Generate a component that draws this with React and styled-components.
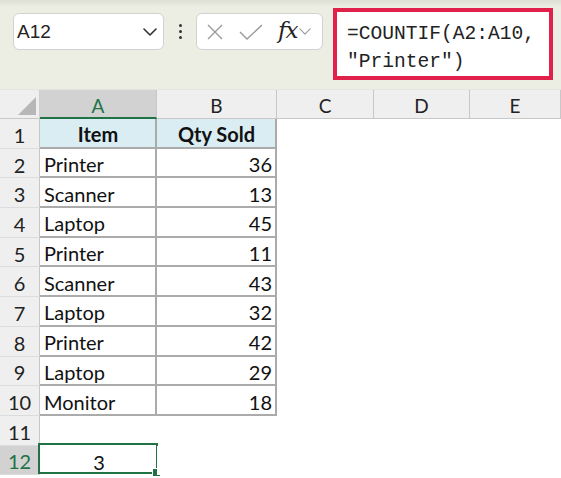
import React from "react";
import styled, { createGlobalStyle } from "styled-components";

const Global = createGlobalStyle`
  html, body { margin: 0; padding: 0; background: #ffffff; }
  body { width: 561px; height: 478px; overflow: hidden; font-family: Lato, "Noto Sans", sans-serif; }
  * { box-sizing: border-box; }
`;

const GREEN = "#217346";

const Toolbar = styled.div`
  height: 90px;
  display: flex;
  align-items: flex-start;
  padding: 8px 0 0 13px;
  background: linear-gradient(#dfe0d4 0px, #e6e7dc 4px, #eceee3 7px, #eceee3 100%);
  border-bottom: 1px solid #e4e4e4;
`;

const NameBox = styled.div`
  margin-top: 5px;
  width: 151px;
  height: 37px;
  background: #fff;
  border: 1px solid #d2d2d2;
  border-radius: 6px;
  display: flex;
  align-items: center;
  justify-content: space-between;
  padding: 0 6px 0 3px;
  font-family: "Liberation Sans", Arial, sans-serif;
  font-size: 19px;
  color: #222;
`;

const Dots = styled.div`
  margin-top: 5px;
  width: 32px;
  height: 37px;
  display: flex;
  flex-direction: column;
  align-items: center;
  justify-content: center;
  gap: 3px;
`;

const Dot = styled.span`
  width: 3px;
  height: 3px;
  border-radius: 50%;
  background: #333;
`;

const FxBox = styled.div`
  margin-top: 5px;
  width: 127px;
  height: 37px;
  background: #fff;
  border: 1px solid #d2d2d2;
  border-radius: 6px;
  display: flex;
  align-items: center;
  padding: 0 0 0 9px;
`;

const FxText = styled.span`
  font-family: "DejaVu Serif", "Liberation Serif", serif;
  font-style: italic;
  font-size: 23px;
  color: #222;
  margin: -4px 2px 0 15px;
  letter-spacing: -1px;
`;

const FormulaBox = styled.div`
  margin-left: 10px;
  width: 220px;
  height: 72px;
  background: #fff;
  border: 4px solid #e0214b;
  padding: 8px 0 0 10px;
  font-family: "Liberation Mono", "DejaVu Sans Mono", monospace;
  font-size: 19.6px;
  line-height: 28px;
  color: #222;
  white-space: pre;
`;

const Sheet = styled.div`
  display: grid;
  grid-template-columns: 40px 117px 120px 97px 96px 91px;
  grid-template-rows: 29px repeat(12, 29.7px);
  font-family: Lato, "Noto Sans", sans-serif;
  color: #111;
`;

const Corner = styled.div`
  background: #efefef;
  border-right: 1px solid #cfcfcf;
  border-bottom: 1px solid #c8c8c8;
  position: relative;
  &::after {
    content: "";
    position: absolute;
    right: 3px;
    bottom: 3px;
    width: 0;
    height: 0;
    border-left: 18px solid transparent;
    border-bottom: 18px solid #b7b7b7;
  }
`;

const ColHead = styled.div`
  background: ${(p) => (p.$active ? "#d2d2d2" : "#efefef")};
  color: ${(p) => (p.$active ? GREEN : "#222")};
  border-right: 1px solid #c8c8c8;
  border-bottom: ${(p) => (p.$active ? `2px solid ${GREEN}` : "1px solid #c8c8c8")};
  display: flex;
  align-items: center;
  justify-content: center;
  font-size: 19px;
  padding-top: 3px;
`;

const RowHead = styled.div`
  background: ${(p) => (p.$active ? "#d2d2d2" : "#efefef")};
  color: ${(p) => (p.$active ? GREEN : "#222")};
  border-right: 1px solid #c8c8c8;
  border-bottom: 1px solid #dcdcdc;
  display: flex;
  align-items: center;
  justify-content: center;
  font-size: 20px;
  padding-top: 3px;
`;

const Cell = styled.div`
  background: ${(p) => (p.$head ? "#daedf3" : "#fff")};
  border-right: ${(p) => (p.$boxed ? "2px solid #ababab" : "none")};
  border-bottom: ${(p) => (p.$boxed ? "2px solid #ababab" : "none")};
  display: flex;
  align-items: center;
  justify-content: ${(p) => (p.$align === "right" ? "flex-end" : p.$align === "center" ? "center" : "flex-start")};
  padding: 3px 3px 0 4px;
  font-size: 20px;
  font-weight: ${(p) => (p.$head ? 700 : 400)};
  position: relative;
`;

const Selection = styled.div`
  position: absolute;
  left: -2px;
  top: -3px;
  right: -1px;
  bottom: 1px;
  border: 2px solid ${GREEN};
  pointer-events: none;
  &::after {
    content: "";
    position: absolute;
    right: -5px;
    bottom: -5px;
    width: 7px;
    height: 7px;
    background: ${GREEN};
    border: 1px solid #fff;
  }
`;

const Icon = styled.svg`
  display: block;
  flex: none;
`;

const Chevron = ({ color = "#333", w = 14, h = 8, sw = 1.6 }) => (
  <Icon width={w} height={h} viewBox="0 0 14 8">
    <path d="M1 1 L7 7 L13 1" fill="none" stroke={color} strokeWidth={sw} strokeLinecap="round" strokeLinejoin="round" />
  </Icon>
);

const data = [
  ["Printer", 36],
  ["Scanner", 13],
  ["Laptop", 45],
  ["Printer", 11],
  ["Scanner", 43],
  ["Laptop", 32],
  ["Printer", 42],
  ["Laptop", 29],
  ["Monitor", 18],
];

const cols = ["A", "B", "C", "D", "E"];

export default function App() {
  const rows = [];
  for (let r = 1; r <= 12; r++) {
    const active = r === 12;
    const cells = [<RowHead key={`h${r}`} $active={active}>{r}</RowHead>];
    cols.forEach((c, ci) => {
      let content = null;
      let props = {};
      if (r === 1 && ci < 2) {
        content = ci === 0 ? "Item" : "Qty Sold";
        props = { $head: true, $boxed: true, $align: "center" };
      } else if (r >= 2 && r <= 10 && ci < 2) {
        const d = data[r - 2];
        content = ci === 0 ? d[0] : d[1];
        props = { $boxed: true, $align: ci === 0 ? "left" : "right" };
      } else if (r === 12 && ci === 0) {
        content = (
          <>
            3
            <Selection />
          </>
        );
        props = { $align: "center" };
      }
      cells.push(
        <Cell key={`${c}${r}`} {...props}>
          {content}
        </Cell>
      );
    });
    rows.push(...cells);
  }

  return (
    <>
      <Global />
      <Toolbar>
        <NameBox>
          <span>A12</span>
          <Chevron />
        </NameBox>
        <Dots>
          <Dot />
          <Dot />
          <Dot />
        </Dots>
        <FxBox>
          <Icon width="18" height="16" viewBox="0 0 18 16">
            <path d="M2 1 L16 15 M16 1 L2 15" stroke="#9a9a9a" strokeWidth="1.4" fill="none" />
          </Icon>
          <Icon width="24" height="16" viewBox="0 0 24 16" style={{ marginLeft: 15 }}>
            <path d="M1 8 L8 15 L23 1" stroke="#9a9a9a" strokeWidth="1.4" fill="none" />
          </Icon>
          <FxText>fx</FxText>
          <Chevron color="#9a9a9a" w={12} h={7} sw={1.3} />
        </FxBox>
        <FormulaBox>{'=COUNTIF(A2:A10,\n"Printer")'}</FormulaBox>
      </Toolbar>
      <Sheet>
        <Corner />
        {cols.map((c) => (
          <ColHead key={c} $active={c === "A"}>
            {c}
          </ColHead>
        ))}
        {rows}
      </Sheet>
    </>
  );
}
